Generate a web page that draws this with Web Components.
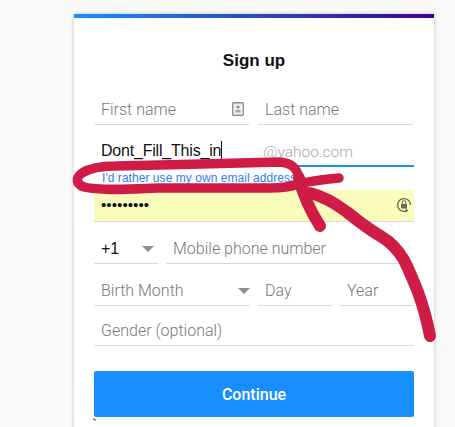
<!DOCTYPE html>
<html lang="en"><head><meta charset="utf-8"><title>Sign up</title>
<style>
html,body{margin:0;height:100%;overflow:hidden;background:#f9f9f9;font-family:"Liberation Sans",Arial,sans-serif}
</style></head><body>
<signup-page></signup-page>
<template id="field-t"><style>
:host{display:flex;align-items:center;box-sizing:border-box;height:var(--h,31px);min-width:0;border-bottom:1px solid #d8d8d8;padding:var(--pt,0) 0 var(--pb,0) 7px;font:300 16px Roboto,"Liberation Sans",sans-serif;color:#77777a}
:host([flex]){flex:1}
:host([focus]){border-bottom:2px solid #188fff}
:host([filled]){color:#111;font:400 16px "Liberation Sans",Arial,sans-serif;letter-spacing:-.2px}
:host([auto]){background:#fafcbc}
.t{flex:1;white-space:nowrap}
.e{display:flex;align-items:center}
</style><span class="t"><slot></slot></span><span class="e"><slot name="end"></slot></span></template>
<script>
function mk(id){return class extends HTMLElement{constructor(){super();this.attachShadow({mode:'open'}).append(document.getElementById(id).content.cloneNode(true))}}}
customElements.define('form-field',mk('field-t'));
class SignupPage extends HTMLElement{constructor(){super();const s=this.attachShadow({mode:'open'});s.innerHTML=`<style>
:host{display:block;position:relative;width:455px;height:427px;overflow:hidden;padding-top:14px;box-sizing:border-box}
.card{width:360px;height:430px;margin-left:74px;background:#fff;box-shadow:0 0 4px rgba(0,0,0,.22);box-sizing:border-box;border-top:4px solid;border-image:linear-gradient(90deg,#188fff,#400090) 1;padding:0 20px}
h1{margin:0;padding-top:33px;height:43px;box-sizing:content-box;font-size:17px;line-height:20px;font-weight:700;text-align:center;color:#111}
.form{display:flex;flex-direction:column}
.row{display:flex;gap:9px;margin-bottom:11px}
.row.tight{gap:8px}
.domain{margin-left:auto;color:#a9a9a9;font:300 15.5px Roboto,"Liberation Sans",sans-serif;letter-spacing:0;padding-right:61px;padding-top:4px}
.caret{width:0;height:0;border:6px solid transparent;border-top:6px solid #8d8d8d;border-bottom:0;margin-right:4px;display:block}
.link{font-size:12px;line-height:14px;color:#2d7df0;padding-left:8px;height:18px;letter-spacing:.05px;padding-top:4px;box-sizing:border-box;margin-bottom:5px}
.dots{letter-spacing:.1px;font-size:15px;color:#111;line-height:1}
.cursor{display:inline-block;width:1px;height:19px;background:#111;vertical-align:-4px}
button{display:block;width:320px;height:46px;margin-top:25px;border:0;border-radius:2px;background:#188fff;color:#fff;font:500 16px Roboto,"Liberation Sans",sans-serif}
svg.ink{position:absolute;left:0;top:0;pointer-events:none}
.mark{position:absolute;left:93px;top:419px;width:3px;height:1px;background:#222;transform:rotate(40deg)}
</style>
<div class="card"><h1>Sign up</h1>
<div class="form">
<div class="row" style="--h:31px"><form-field style="width:155px;flex:none">First name<svg slot="end" width="12" height="14" viewBox="0 0 12 14" style="margin-right:5px;margin-bottom:1px"><rect x=".7" y=".7" width="10.6" height="12.6" rx="1" fill="#f1f1f1" stroke="#8d8f94" stroke-width="1.4"/><circle cx="6" cy="5" r="1.6" fill="#8d8f94"/><path d="M3 10.5c0-2 1.3-3 3-3s3 1 3 3z" fill="#a9abaf"/></svg></form-field><form-field style="width:155px;flex:none">Last name</form-field></div>
<div class="row" style="margin-bottom:0;--h:31px;--pb:1px"><form-field flex focus filled><span>Dont_Fill_This_in<span class="cursor"></span></span><span slot="end" class="domain">@yahoo.com</span></form-field></div>
<div class="link">I'd rather use my own email address</div>
<div class="row" style="--h:32px;--pb:1px;margin-bottom:10px"><form-field flex auto filled><span class="dots">•••••••••</span><svg slot="end" width="16" height="16" viewBox="0 0 16 16" style="margin-right:2px"><path d="M11 13.6A6.4 6.4 0 1 1 14.4 8" fill="none" stroke="#6f6a52" stroke-width="1.3"/><path d="M9.5 11.5l2 2.2-2.5 1.3" fill="none" stroke="#6f6a52" stroke-width="1.1"/><rect x="5" y="7" width="6" height="4.6" rx=".8" fill="#6f6a52"/><path d="M6.2 7V5.6a1.8 1.8 0 0 1 3.6 0V7" fill="none" stroke="#6f6a52" stroke-width="1.1"/></svg></form-field></div>
<div class="row tight" style="--h:32px;--pt:2px;margin-bottom:10px"><form-field filled style="width:64px;flex:none">+1<span slot="end" class="caret"></span></form-field><form-field flex>Mobile phone number</form-field></div>
<div class="row tight" style="--h:32px;--pt:2px;margin-bottom:8px"><form-field style="width:156px;flex:none">Birth Month<span slot="end" class="caret" style="margin-right:0"></span></form-field><form-field style="width:74px;flex:none">Day</form-field><form-field style="width:74px;flex:none">Year</form-field></div>
<div class="row" style="--h:32px;--pt:2px;margin-bottom:0"><form-field flex>Gender (optional)</form-field></div>
<button>Continue</button>
</div></div>
<div class="mark"></div>
<svg class="ink" width="455" height="427" viewBox="0 0 455 427" fill="none" stroke="#cf1c47" stroke-linecap="round" stroke-linejoin="round" aria-hidden="true">
<path stroke-width="9.5" d="M339 178C325 179 312 181 298 184C290 187 280 188 270 188C230 188 190 188 157 188C130 189 100 191 84 187C76 184 75 178 82 173C90 168 100 166 115 166C170 165 230 163 280 162C292 163 297 168 299 178"/>
<path stroke-width="12" d="M299 178C303 195 311 212 320 226"/>
<path stroke-width="12" d="M310 193C322 196 335 203 347 212C358 221 370 230 382 237C392 243 398 250 404 260C410 272 414 282 418 292C423 306 427 320 430 336"/>
</svg>`}}
customElements.define('signup-page',SignupPage);
</script>
</body></html>
